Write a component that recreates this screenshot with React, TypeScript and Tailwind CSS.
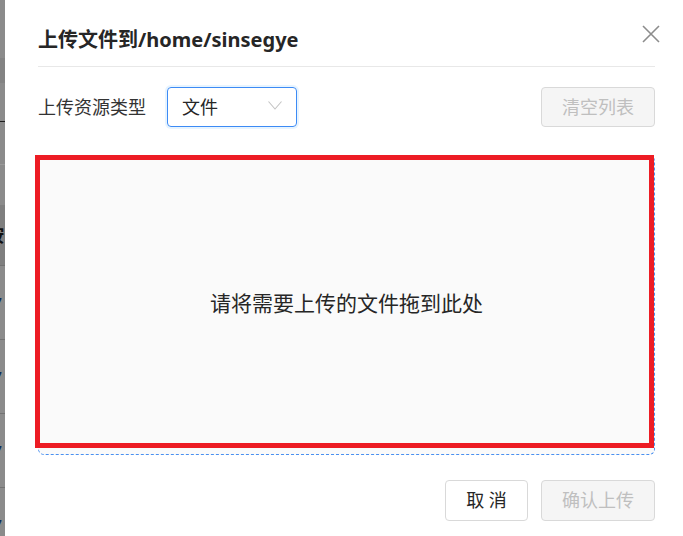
const font = {
  fontFamily: '"Noto Sans", "Noto Sans CJK SC", sans-serif',
};

function BackdropStrip() {
  // sliver of the page behind the dialog, dimmed by the mask
  const rows = ["7", "7", "7", "7"];
  return (
    <div className="flex w-[5px] shrink-0 flex-col overflow-hidden bg-[#8b8b8b]">
      <div className="h-[58px] shrink-0" />
      <div className="h-[25px] shrink-0 bg-[#838383]" />
      <div className="h-[39px] shrink-0 border-b border-[#1f1f1f]" />
      <div className="h-[43px] shrink-0 border-b border-[#9a9a9a]" />
      <div className="h-[40px] shrink-0" />
      <div className="flex h-[60px] shrink-0 items-center bg-[#7f7f7f]">
        <span className="-ml-[14px] text-[18px] font-bold text-[#111]">按</span>
      </div>
      {rows.map((r, i) => (
        <div
          key={i}
          className="flex h-[74px] shrink-0 items-center border-t border-[#727272]"
        >
          <span className="-ml-[6px] text-[14px] text-[#0b2a55]">{r}</span>
        </div>
      ))}
    </div>
  );
}

export default function App() {
  return (
    <div
      className="flex h-[536px] w-[683px] overflow-hidden bg-white text-[#333]"
      style={font}
    >
      <BackdropStrip />
      <div className="relative flex-1 bg-white pl-[33px] pr-[28px]">
        <button className="absolute right-[23px] top-[25px] text-[#8c8c8c]">
          <svg width="18" height="18" viewBox="0 0 18 18" fill="none">
            <path d="M1 1L17 17M17 1L1 17" stroke="currentColor" strokeWidth="1.6" />
          </svg>
        </button>

        <div className="border-b border-[#e8e8e8] pb-[11px] pt-[25px]">
          <h1 className="text-[20px] font-bold leading-[30px] text-[#262626]">
            上传文件到/home/sinsegye
          </h1>
        </div>

        <div className="mt-[20px] flex h-[40px] items-center justify-between">
          <div className="flex items-center">
            <span className="text-[18px] text-[#333]">上传资源类型</span>
            <div className="ml-[21px] flex h-[40px] w-[130px] items-center justify-between rounded-[4px] border border-[#3d8bf5] pl-[14px] pr-[14px] shadow-[0_0_0_2px_rgba(24,144,255,0.1)]">
              <span className="text-[18px] text-[#262626]">文件</span>
              <svg width="14" height="9" viewBox="0 0 14 9" fill="none" className="mt-[-3px] text-[#c4c4c4]">
                <path d="M0.5 0.5L7 8L13.5 0.5" stroke="currentColor" strokeWidth="1.1" />
              </svg>
            </div>
          </div>
          <button className="h-[40px] w-[114px] rounded-[4px] border border-[#d9d9d9] bg-[#f5f5f5] text-[18px] text-[#bfbfbf]">
            清空列表
          </button>
        </div>

        <div className="relative mt-[28px] flex h-[300px] items-center justify-center rounded-[6px] border border-dashed border-[#4a90f0] bg-[#fafafa]">
          <span className="-mt-[3px] text-[21px] text-[#262626]">请将需要上传的文件拖到此处</span>
          <div className="absolute -left-[4px] -top-[1px] h-[293px] w-[619px] border-[5px] border-[#ed1c24]" />
        </div>

        <div className="mt-[25px] flex justify-end gap-[13px]">
          <button className="h-[41px] w-[83px] rounded-[4px] border border-[#d9d9d9] bg-white text-[18px] text-[#262626]">
            取 消
          </button>
          <button className="h-[41px] w-[114px] rounded-[4px] border border-[#d9d9d9] bg-[#f5f5f5] text-[18px] text-[#bfbfbf]">
            确认上传
          </button>
        </div>
      </div>
    </div>
  );
}
